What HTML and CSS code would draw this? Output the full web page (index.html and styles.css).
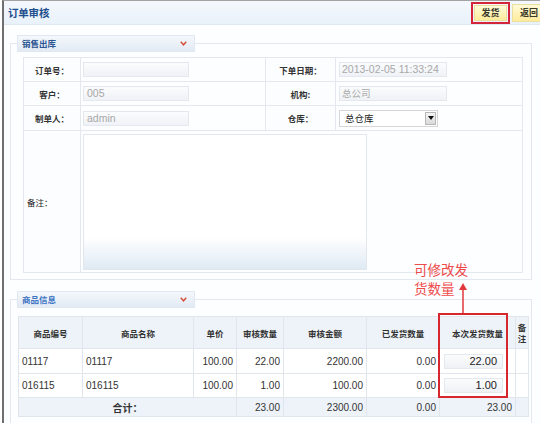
FILE: index.html
```html
<!DOCTYPE html>
<html>
<head>
<meta charset="utf-8">
<link rel="stylesheet" href="styles.css">
</head>
<body>
<div class="frame">
  <div class="header">
    <div class="title">订单审核</div>
    <div class="spacer"></div>
    <div class="mark"><button class="btn">发货</button></div>
    <button class="btn btn-back">返回</button>
  </div>

  <fieldset class="box box1">
    <legend class="legend"><span class="legend-text">销售出库</span><svg class="chev" width="7" height="5" viewBox="0 0 7 5"><polyline points="0.8,0.8 3.5,3.8 6.2,0.8" fill="none" stroke="#d5503a" stroke-width="1.5"/></svg></legend>
    <table class="form">
      <colgroup><col style="width:57px"><col style="width:185px"><col style="width:70px"><col style="width:187px"></colgroup>
      <tr class="r1">
        <td class="lbl">订单号：</td>
        <td class="val"><div class="inp"></div></td>
        <td class="lbl">下单日期：</td>
        <td class="val val2"><div class="inp inp2">2013-02-05 11:33:24</div></td>
      </tr>
      <tr class="r1">
        <td class="lbl">客户：</td>
        <td class="val"><div class="inp">005</div></td>
        <td class="lbl">机构:</td>
        <td class="val val2"><div class="inp inp2 cjk">总公司</div></td>
      </tr>
      <tr class="r2">
        <td class="lbl">制单人：</td>
        <td class="val"><div class="inp">admin</div></td>
        <td class="lbl">仓库：</td>
        <td class="val val2"><div class="select"><span class="sel-text">总仓库</span><span class="sel-btn"><svg width="6" height="4" viewBox="0 0 6 4"><polygon points="0,0 6,0 3,4" fill="#111"/></svg></span></div></td>
      </tr>
      <tr class="r3">
        <td class="lbl lbl-left">备注：</td>
        <td class="val" colspan="3"><div class="textarea"></div></td>
      </tr>
    </table>
  </fieldset>

  <fieldset class="box box2">
    <legend class="legend"><span class="legend-text legend-text2">商品信息</span><svg class="chev" width="7" height="5" viewBox="0 0 7 5"><polyline points="0.8,0.8 3.5,3.8 6.2,0.8" fill="none" stroke="#d5503a" stroke-width="1.5"/></svg></legend>
    <table class="grid">
      <colgroup><col style="width:64px"><col style="width:111px"><col style="width:43px"><col style="width:47px"><col style="width:83px"><col style="width:73px"><col style="width:76px"><col style="width:13px"></colgroup>
      <tr class="head">
        <th>商品编号</th><th>商品名称</th><th>单价</th><th>审核数量</th><th>审核金额</th><th>已发货数量</th><th>本次发货数量</th><th class="narrow">备注</th>
      </tr>
      <tr class="row">
        <td>01117</td><td>01117</td><td class="num">100.00</td><td class="num">22.00</td><td class="num">2200.00</td><td class="num">0.00</td><td><div class="qty">22.00</div></td><td></td>
      </tr>
      <tr class="row row2">
        <td>016115</td><td>016115</td><td class="num">100.00</td><td class="num">1.00</td><td class="num">100.00</td><td class="num">0.00</td><td><div class="qty">1.00</div></td><td></td>
      </tr>
      <tr class="total">
        <td colspan="3" class="sum">合计：</td><td class="num">23.00</td><td class="num">2300.00</td><td class="num">0.00</td><td class="num">23.00</td><td></td>
      </tr>
    </table>
  </fieldset>
</div>

<div class="note"><div>可修改发</div><div>货数量</div></div>
<svg class="arrow" width="12" height="32" viewBox="0 0 12 32"><line x1="6" y1="7" x2="6" y2="32" stroke="#e0393b" stroke-width="1.5"/><polygon points="2,8 10,8 6,1" fill="#e0393b"/></svg>
<div class="redbox"></div>
</body>
</html>
```
FILE: styles.css
```css
html, body {
  margin: 0;
  padding: 0;
  background: #ffffff;
}
body {
  position: relative;
  width: 540px;
  height: 423px;
  overflow: hidden;
  font-family: "Liberation Sans", "Noto Sans CJK SC", sans-serif;
  font-size: 10px;
  color: #333;
}
.frame {
  margin-left: 2px;
  border-left: 2px solid #6f6f6f;
  border-top: 1px solid #a3a3a3;
  height: 422px;
  overflow: hidden;
  background: #fdfeff;
}
.header {
  display: flex;
  align-items: center;
  height: 23px;
  padding-left: 4px;
  background: linear-gradient(#f4f8fd, #e9f1fa);
  border-bottom: 1px solid #dfe7f1;
}
.title {
  font-family: "Noto Sans CJK SC", sans-serif;
  font-size: 10.5px;
  font-weight: bold;
  color: #1f4f8e;
  letter-spacing: -0.2px;
}
.spacer { flex: 1; }
.mark {
  border: 2px solid #d3243a;
  padding: 1px 1px;
  margin-right: 2px;
  display: flex;
  height: 16px;
}
.btn {
  font-family: "Noto Sans CJK SC", sans-serif;
  font-size: 9px;
  font-weight: bold;
  color: #3a3a2a;
  width: 33px;
  height: 16px;
  padding: 0;
  border: 1px solid #eadf9c;
  background: linear-gradient(#fffbd8, #ffeb9a);
  line-height: 14px;
}
.btn-back {
  width: 34px;
  height: 18px;
  margin-right: -6px;
}
.box {
  border: 1px solid #e3e8ef;
  margin: 10px 0 0 6px;
  width: 522px;
  box-sizing: border-box;
  min-width: 0;
}
.box1 { padding: 5px 9px 6px 12px; }
.box2 { padding: 8px 3px 6px 7px; margin-top: 11px; }
.legend {
  width: 178px;
  height: 17px;
  box-sizing: border-box;
  padding: 0 5px 0 4px;
  margin-left: -6px;
  background: linear-gradient(#f5f8fc, #e2eaf4);
  border: 1px solid #e1e8f1;
  display: flex;
  align-items: center;
  justify-content: space-between;
}
.box2 .legend { margin-left: -1px; }
.legend-text {
  font-family: "Noto Sans CJK SC", sans-serif;
  font-size: 8.5px;
  font-weight: bold;
  color: #2a5592;
  line-height: 15px;
}
.legend-text2 { color: #3d74c4; }
.chev { display: block; margin-right: 2px; }

table {
  border-collapse: collapse;
  table-layout: fixed;
}
.form { width: 499px; }
.form td {
  border: 1px solid #e3e8ee;
  padding: 0;
  vertical-align: middle;
}
.form .r1 td { height: 23px; }
.form .r2 td { height: 24px; }
.form .r3 td { height: 141px; }
.lbl {
  font-family: "Noto Sans CJK SC", sans-serif;
  font-size: 8.5px;
  font-weight: bold;
  color: #333;
  text-align: center;
  background: #fcfdfe;
}
.lbl-left {
  text-align: left;
  padding-left: 3px !important;
  font-weight: normal;
  color: #222;
}
.val { padding-left: 2px !important; }
.val2 { padding-left: 3px !important; }
.inp {
  width: 106px;
  height: 15px;
  box-sizing: border-box;
  border: 1px solid #e4e8ed;
  background: linear-gradient(#fbfcfd, #eff2f6);
  color: #a8a8a8;
  font-size: 10.5px;
  line-height: 13px;
  padding-left: 3px;
  white-space: nowrap;
  overflow: hidden;
}
.inp2 { width: 108px; padding-left: 2px; }
.cjk { font-family: "Noto Sans CJK SC", sans-serif; font-size: 9.5px; }
.select {
  width: 99px;
  height: 17px;
  box-sizing: border-box;
  border: 1px solid #d6d6d6;
  background: #fff;
  display: flex;
  align-items: center;
  justify-content: space-between;
  padding: 0 1px 0 5px;
}
.sel-text {
  font-family: "Noto Sans CJK SC", sans-serif;
  font-size: 9.5px;
  color: #222;
}
.sel-btn {
  width: 11px;
  height: 13px;
  box-sizing: border-box;
  border: 1px solid #b8b8b8;
  background: linear-gradient(#f6f6f6, #d9d9d9);
  display: flex;
  align-items: center;
  justify-content: center;
}
.sel-btn svg { display: block; }
.textarea {
  width: 284px;
  height: 136px;
  box-sizing: border-box;
  border: 1px solid #e2e7ed;
  background: linear-gradient(#ffffff 0%, #ffffff 76%, #dfeaf4 100%);
}

.grid { width: 510px; }
.grid th, .grid td {
  border: 1px solid #e1e6ed;
  padding: 0 3px;
  vertical-align: middle;
  white-space: nowrap;
}
.grid .head th {
  height: 31px;
  background: #eef3f9;
  font-family: "Noto Sans CJK SC", sans-serif;
  font-size: 8.5px;
  font-weight: bold;
  color: #333;
  text-align: center;
}
.grid .head th.narrow {
  white-space: normal;
  padding: 0 1px;
  line-height: 11px;
}
.grid .row td {
  height: 24px;
  background: #fff;
  font-size: 10px;
  color: #333;
}
.grid .row2 td { height: 23px; }
.grid .total td {
  height: 18px;
  background: #eef3f9;
  font-size: 10px;
  color: #333;
}
.num { text-align: right; }
.sum {
  text-align: center;
  font-family: "Noto Sans CJK SC", sans-serif;
  font-size: 8.5px;
  font-weight: bold;
}
.qty {
  width: 59px;
  height: 15px;
  box-sizing: border-box;
  margin-left: 1px;
  border: 1px solid #e5e9ee;
  background: linear-gradient(#fbfcfd, #eef1f5);
  text-align: right;
  padding-right: 5px;
  font-size: 11px;
  line-height: 13px;
  color: #222;
}

.note {
  position: absolute;
  left: 414px;
  top: 260px;
  font-family: "Noto Sans CJK SC", sans-serif;
  font-size: 13.5px;
  line-height: 19px;
  color: #ee4a4a;
}
.arrow {
  position: absolute;
  left: 457px;
  top: 282px;
}
.redbox {
  position: absolute;
  left: 438px;
  top: 313px;
  width: 66px;
  height: 81px;
  border: 2px solid #d8262e;
}
```
